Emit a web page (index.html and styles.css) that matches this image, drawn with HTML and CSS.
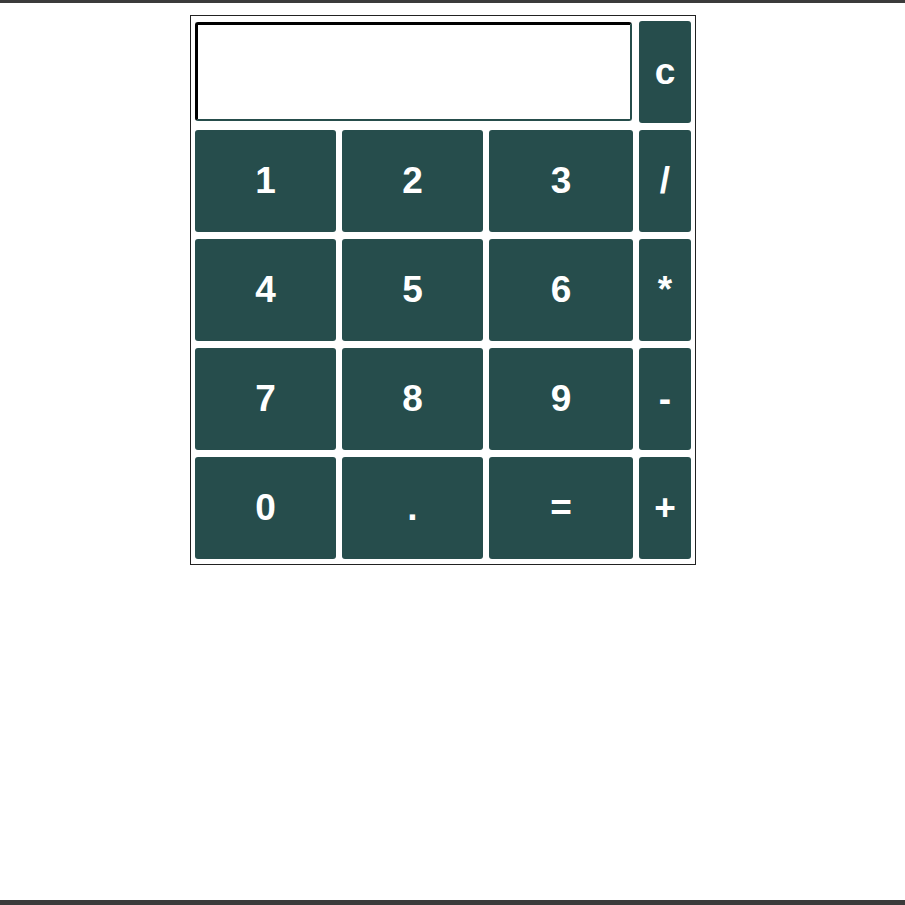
FILE: index.html
```html
<!DOCTYPE html>
<html>
<head>
<meta charset="utf-8">
<link rel="stylesheet" href="styles.css">
</head>
<body>
<div class="topbar"></div>
<main class="page">
  <div class="calc">
    <input class="display" type="text">
    <button class="key">c</button>
    <button class="key">1</button>
    <button class="key">2</button>
    <button class="key">3</button>
    <button class="key">/</button>
    <button class="key">4</button>
    <button class="key">5</button>
    <button class="key">6</button>
    <button class="key">*</button>
    <button class="key">7</button>
    <button class="key">8</button>
    <button class="key">9</button>
    <button class="key">-</button>
    <button class="key">0</button>
    <button class="key">.</button>
    <button class="key">=</button>
    <button class="key">+</button>
  </div>
</main>
<div class="bottombar"></div>
</body>
</html>
```

FILE: styles.css
```css
html, body {
  margin: 0;
  padding: 0;
  background: #ffffff;
  height: 905px;
  overflow: hidden;
}
body {
  display: flex;
  flex-direction: column;
  font-family: "Liberation Sans", Arial, sans-serif;
}
.topbar {
  height: 3px;
  background: #3b3b3b;
}
.bottombar {
  height: 5px;
  background: #3b3b3b;
}
.page {
  flex: 1;
  padding-top: 12px;
  padding-left: 190px;
}
.calc {
  display: grid;
  grid-template-columns: 141px 141px 144px 52px;
  grid-template-rows: repeat(5, 102px);
  column-gap: 6px;
  row-gap: 7px;
  width: max-content;
  border: 1px solid #222;
  padding: 5px 4px 5px 4px;
}
.display {
  grid-column: 1 / 4;
  margin: 1px 1px 2px 0;
  box-sizing: border-box;
  width: calc(100% - 1px);
  height: 99px;
  border: 2px solid #264d4b;
  border-top: 3px solid #000;
  border-left: 3px solid #000;
  border-radius: 3px;
  background: #fff;
  outline: none;
  padding: 0;
}
.key {
  margin: 0;
  padding: 0;
  border: none;
  border-radius: 3px;
  background: #264d4c;
  color: #ffffff;
  font-family: "Liberation Sans", Arial, sans-serif;
  font-weight: bold;
  font-size: 37px;
}
```
